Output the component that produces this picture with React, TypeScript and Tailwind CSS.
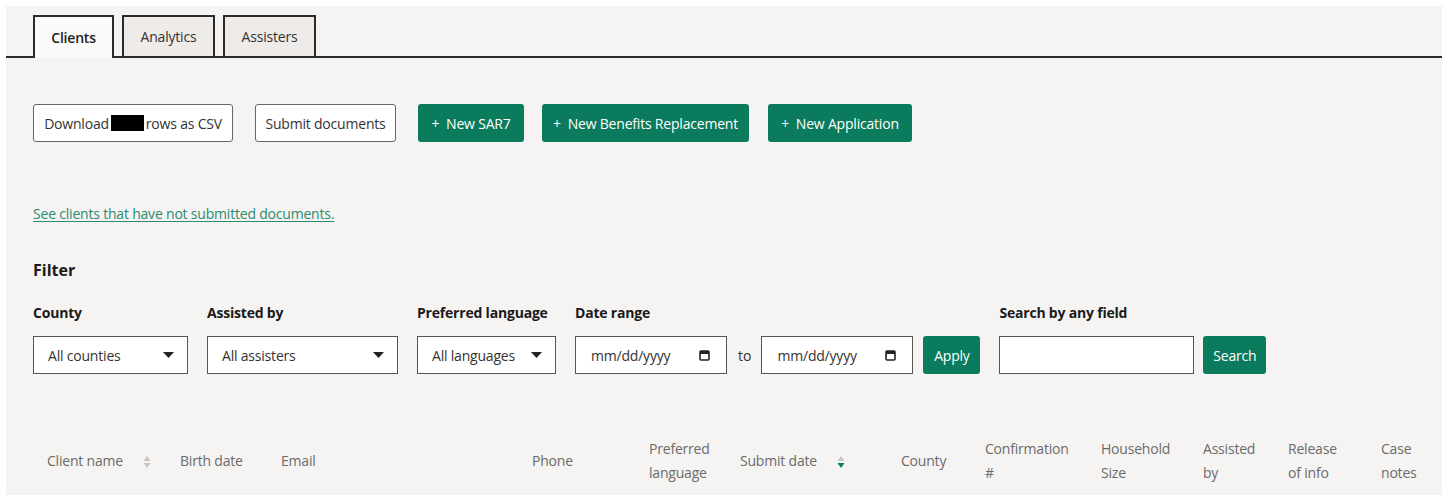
import React from 'react';

const GREEN = 'bg-[#0a7b5c]';

const tabs = ['Clients', 'Analytics', 'Assisters'];

const columns: { label: React.ReactNode; width: string; sort?: 'none' | 'desc' }[] = [
    { label: 'Client name', width: 'w-[133px]', sort: 'none' },
    { label: 'Birth date', width: 'w-[101px]' },
    { label: 'Email', width: 'w-[251px]' },
    { label: 'Phone', width: 'w-[117px]' },
    { label: <>Preferred<br />language</>, width: 'w-[91px]' },
    { label: 'Submit date', width: 'w-[161px]', sort: 'desc' },
    { label: 'County', width: 'w-[84px]' },
    { label: <>Confirmation<br />#</>, width: 'w-[116px]' },
    { label: <>Household<br />Size</>, width: 'w-[102px]' },
    { label: <>Assisted<br />by</>, width: 'w-[85px]' },
    { label: <>Release<br />of info</>, width: 'w-[93px]' },
    { label: <>Case<br />notes</>, width: 'w-[75px]' },
];

const SortIcon: React.FC<{ active?: boolean }> = ({ active }) => (
    <svg width="8" height="14" viewBox="0 0 8 14" className="ml-[20px] inline-block align-middle">
        <path d="M4 1 L7.5 6 H0.5 Z" fill="#c9c6c2" />
        <path d="M4 13 L7.5 8 H0.5 Z" fill={active ? '#0a7b5c' : '#c9c6c2'} />
    </svg>
);

const Caret = () => (
    <svg width="11" height="6" viewBox="0 0 11 6" className="pointer-events-none absolute right-[14px] top-1/2 -translate-y-1/2">
        <path d="M0 0 H11 L5.5 6 Z" fill="#222" />
    </svg>
);

const Select: React.FC<{ value: string; width: string }> = ({ value, width }) => (
    <div className={`relative ${width} h-[38px]`}>
        <select className="h-full w-full appearance-none border border-[#555] bg-white pl-[14px] text-[14px] tracking-[-0.2px] text-[#333] outline-none">
            <option>{value}</option>
        </select>
        <Caret />
    </div>
);

const DateBox = () => (
    <div className="flex h-[38px] w-[152px] items-center justify-between border border-[#555] bg-white pl-[15px] pr-[16px] text-[14px] tracking-[-0.2px] text-[#333]">
        <span>mm/dd/yyyy</span>
        <svg width="11" height="12" viewBox="0 0 11 12">
            <rect x="1" y="2" width="9" height="9" rx="1" fill="none" stroke="#222" strokeWidth="1.6" />
            <rect x="1" y="2" width="9" height="3" fill="#222" />
        </svg>
    </div>
);

const Label: React.FC<{ children: React.ReactNode }> = ({ children }) => (
    <label className="mb-[13px] block text-[14px] font-bold tracking-[-0.2px] text-[#1a1a1a]">{children}</label>
);

const outline = 'flex h-[38px] items-center justify-center rounded-[3px] border border-[#666] bg-white text-[14px] tracking-[-0.2px] text-[#333]';
const solid = `flex h-[38px] items-center justify-center rounded-[3px] ${GREEN} text-[14px] tracking-[-0.2px] text-white`;

export default function App() {
    return (
        <div className="min-h-[495px] bg-white pl-[6px] pr-[5px] pt-[6px] font-['Open_Sans',sans-serif]">
            <div className="min-h-[489px] overflow-hidden bg-[#f5f4f2]">
                {/* tab strip */}
                <div className="flex items-end gap-[8px] border-b-2 border-[#2b2b2b] pl-[27px] pt-[9px]">
                    {tabs.map((tab, i) => (
                        <div
                            key={tab}
                            className={
                                i === 0
                                    ? '-mb-[2px] flex h-[43px] w-[81px] items-center justify-center border-2 border-b-0 border-[#2b2b2b] bg-[#fbfaf9] text-[14px] font-semibold tracking-[-0.2px] text-[#222]'
                                    : 'flex h-[41px] w-[93px] items-center justify-center border-2 border-b-0 border-[#2b2b2b] bg-[#eeebe8] text-[14px] tracking-[-0.2px] text-[#333]'
                            }
                        >
                            {tab}
                        </div>
                    ))}
                </div>

                <div className="px-[27px]">
                    {/* actions */}
                    <div className="mt-[46px] flex items-center">
                        <button className={`${outline} w-[200px]`}>
                            Download
                            <span className="mx-[2px] inline-block h-[16px] w-[33px] bg-black" />
                            rows as CSV
                        </button>
                        <button className={`${outline} ml-[22px] w-[141px]`}>Submit documents</button>
                        <button className={`${solid} ml-[22px] w-[106px]`}>+&nbsp; New SAR7</button>
                        <button className={`${solid} ml-[18px] w-[207px]`}>+&nbsp; New Benefits Replacement</button>
                        <button className={`${solid} ml-[19px] w-[144px]`}>+&nbsp; New Application</button>
                    </div>

                    <a href="#" className="mt-[61px] inline-block text-[14px] tracking-[-0.2px] text-[#2b8a6f] underline underline-offset-2">
                        See clients that have not submitted documents.
                    </a>

                    <h2 className="mt-[33px] text-[16px] font-bold text-[#1a1a1a]">Filter</h2>

                    {/* filters */}
                    <div className="mt-[20px] flex items-end">
                        <div>
                            <Label>County</Label>
                            <Select value="All counties" width="w-[155px]" />
                        </div>
                        <div className="ml-[19px]">
                            <Label>Assisted by</Label>
                            <Select value="All assisters" width="w-[191px]" />
                        </div>
                        <div className="ml-[19px]">
                            <Label>Preferred language</Label>
                            <Select value="All languages" width="w-[139px]" />
                        </div>
                        <div className="ml-[19px]">
                            <Label>Date range</Label>
                            <div className="flex items-center">
                                <DateBox />
                                <span className="ml-[11px] mr-[10px] text-[14px] text-[#333]">to</span>
                                <DateBox />
                                <button className={`${solid} ml-[10px] w-[57px]`}>Apply</button>
                            </div>
                        </div>
                        <div className="ml-[19px]">
                            <Label>Search by any field</Label>
                            <div className="flex items-center">
                                <input className="h-[38px] w-[195px] border border-[#555] bg-white outline-none" />
                                <button className={`${solid} ml-[9px] w-[63px]`}>Search</button>
                            </div>
                        </div>
                    </div>

                    {/* client table */}
                    <table className="mt-[63px] w-[1409px] max-w-none table-fixed border-collapse">
                        <thead>
                            <tr>
                                {columns.map((col, i) => (
                                    <th
                                        key={i}
                                        className={`${col.width} px-[14px] text-left align-middle text-[14px] font-normal leading-[24px] tracking-[-0.2px] text-[#6b6b6b]`}
                                    >
                                        {col.label}
                                        {col.sort && <SortIcon active={col.sort === 'desc'} />}
                                    </th>
                                ))}
                            </tr>
                        </thead>
                    </table>
                </div>
            </div>
        </div>
    );
}
